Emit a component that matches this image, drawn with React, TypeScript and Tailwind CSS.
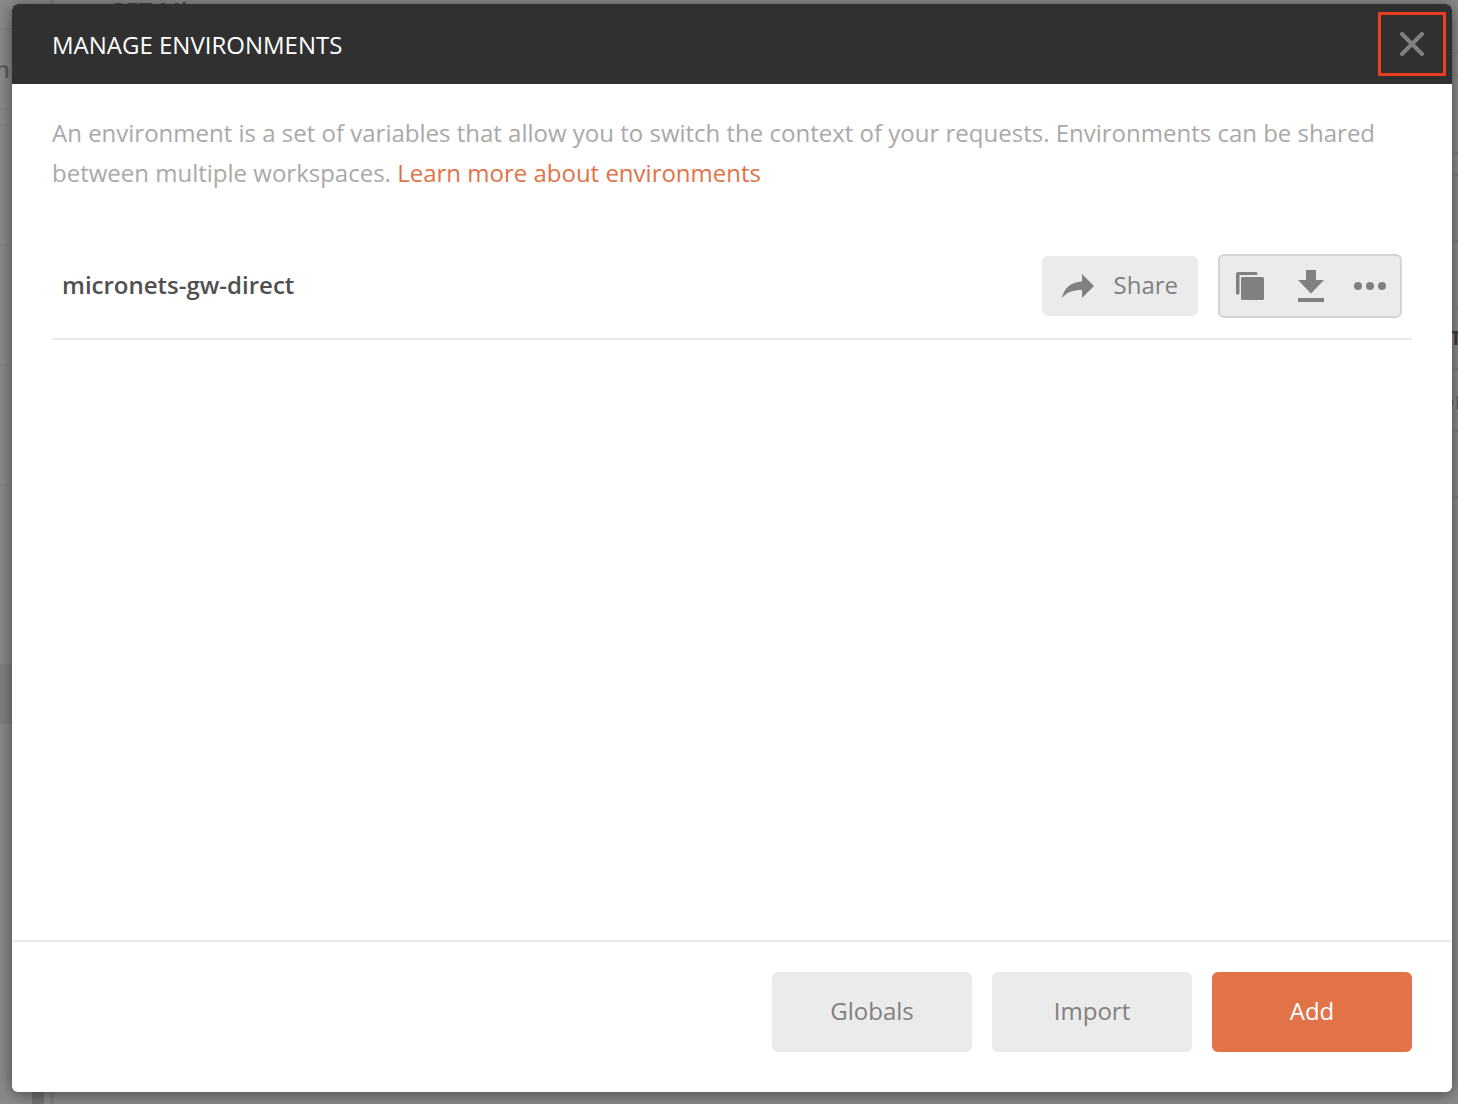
import React, { useState } from 'react';

interface Environment {
  id: string;
  name: string;
}

interface StripRow {
  id: string;
  className: string;
  text?: string;
}

const environments: Environment[] = [
  { id: 'e1', name: 'micronets-gw-direct' },
];

// Rows of the workspace that stay visible on both sides of the dialog
const sidebarRows: StripRow[] = [
  { id: 'l1', className: 'h-[30px] border-b-2' },
  { id: 'l2', className: 'h-20 justify-end border-b-2 pr-10 text-2xl font-semibold text-[#5c5c5c]', text: 'n' },
  { id: 'l3', className: 'h-4 border-b-2' },
  { id: 'l4', className: 'h-[120px] border-b-2' },
  { id: 'l5', className: 'h-[120px] border-b-2' },
  { id: 'l6', className: 'h-[120px] border-b-2' },
  { id: 'l7', className: 'h-[178px]' },
  { id: 'l8', className: 'h-[60px] bg-[#808080]' },
];

const detailRows: StripRow[] = [
  { id: 'r1', className: 'h-[54px] border-b-2' },
  { id: 'r2', className: 'h-[22px] border-b-2' },
  { id: 'r3', className: 'h-[78px] border-b-2' },
  { id: 'r4', className: 'h-[22px] border-b-2' },
  { id: 'r5', className: 'h-[66px] border-b-2' },
  { id: 'r6', className: 'h-[66px] border-b-2' },
  { id: 'r7', className: 'h-[62px] border-b-2 pl-2.5 text-xl font-bold text-[#3f3f3f]', text: 'T' },
  { id: 'r8', className: 'h-[62px] border-b-2 text-2xl text-[#666666]', text: 'or' },
  { id: 'r9', className: 'h-[66px] border-b-2' },
];

function Strip({ rows }: { rows: StripRow[] }) {
  return (
    <>
      {rows.map((row) => (
        <div key={row.id} className={`flex items-center overflow-hidden border-[#7f7f7f] ${row.className}`}>
          {row.text}
        </div>
      ))}
    </>
  );
}

function Workspace() {
  return (
    <div aria-hidden="true" className="absolute inset-0 flex overflow-hidden bg-[#8b8b8b]">
      <div className="flex w-[50px] shrink-0 flex-col">
        <Strip rows={sidebarRows} />
        <div className="ml-8 w-3 grow bg-[#727272]" />
      </div>
      <div className="w-1 shrink-0 bg-[#7f7f7f]" />
      <div className="grow overflow-hidden pl-[54px] text-2xl leading-[22px] font-semibold text-[#4a4a4a]">GET Mi</div>
      <div className="flex w-[18px] shrink-0 flex-col">
        <Strip rows={detailRows} />
      </div>
    </div>
  );
}

function ShareIcon() {
  return (
    <svg className="h-6 w-8" viewBox="0 0 32 24" fill="currentColor" aria-hidden="true">
      <path d="M20 0 32 12 20 24V16C11 16 5 18 0 24 2 14 9 8 20 7.500Z" />
    </svg>
  );
}

function DuplicateIcon() {
  return (
    <svg className="h-7 w-7" viewBox="0 0 28 28" fill="currentColor" aria-hidden="true">
      <rect x="5" y="5" width="23" height="23" rx="1.500" />
      <path d="M2 0H20a1.500 1.500 0 0 1 0 3H3.500V21a1.750 1.750 0 0 1-3.500 0V2a2 2 0 0 1 2-2Z" />
    </svg>
  );
}

function DownloadIcon() {
  return (
    <svg className="h-8 w-7" viewBox="0 0 28 32" fill="currentColor" aria-hidden="true">
      <path d="M10 0H20V10H28L15 23.500 2 10H10ZM2 28H28V32H2Z" />
    </svg>
  );
}

function MoreIcon() {
  return (
    <svg className="h-8 w-8" viewBox="0 0 32 32" fill="currentColor" aria-hidden="true">
      <circle cx="4" cy="16" r="4" />
      <circle cx="16" cy="16" r="4" />
      <circle cx="28" cy="16" r="4" />
    </svg>
  );
}

function EnvironmentRow({ environment }: { environment: Environment }) {
  return (
    <li className="flex items-center justify-between border-b-2 border-[#eaeaea] px-2.5 pb-5">
      <span className="pb-0.5 font-semibold text-[#505050]">{environment.name}</span>
      <div className="flex items-center gap-5 text-[#808080]">
        <button type="button" className="flex h-[60px] items-center gap-5 rounded-md bg-[#ebebeb] px-5">
          <ShareIcon />
          <span className="pb-0.5">Share</span>
        </button>
        <div className="flex h-16 items-center rounded-md border-2 border-[#d4d4d4] bg-[#ebebeb]">
          <button type="button" aria-label="Duplicate" className="flex h-full w-[60px] items-center justify-center">
            <DuplicateIcon />
          </button>
          <button type="button" aria-label="Download" className="flex h-full w-[60px] items-center justify-center">
            <DownloadIcon />
          </button>
          <button type="button" aria-label="More actions" className="flex h-full w-[60px] items-center justify-center">
            <MoreIcon />
          </button>
        </div>
      </div>
    </li>
  );
}

export default function App() {
  const [open, setOpen] = useState(true);

  return (
    <div className="relative flex min-h-screen pt-1 pr-1.5 pb-3 pl-3 font-['Open_Sans',sans-serif] text-2xl">
      <Workspace />
      {open && (
        <section
          role="dialog"
          aria-labelledby="dialog-title"
          className="relative flex grow flex-col overflow-hidden rounded-md bg-white shadow-[0_2px_16px_rgba(0,0,0,0.5)]"
        >
          <header className="flex h-20 items-center justify-between bg-[#303030] pr-1.5 pl-10">
            <h1 id="dialog-title" className="pt-0.5 text-white">MANAGE ENVIRONMENTS</h1>
            <button
              type="button"
              aria-label="Close"
              onClick={() => setOpen(false)}
              className="flex h-16 w-[68px] items-center justify-center border-3 border-[#e93d22] text-[#808080]"
            >
              <svg className="h-6 w-6" viewBox="0 0 24 24" fill="none" stroke="currentColor" strokeWidth="4" strokeLinecap="round" aria-hidden="true">
                <path d="M2 2 22 22M22 2 2 22" />
              </svg>
            </button>
          </header>

          <main className="grow px-10 pt-[29px]">
            <p className="leading-10 text-[#a9a9a9]">
              An environment is a set of variables that allow you to switch the context of your requests. Environments can be shared between multiple workspaces.{' '}
              <a href="#environments" className="text-[#e27247]">Learn more about environments</a>
            </p>
            <ul className="mt-[61px]">
              {environments.map((environment) => (
                <EnvironmentRow key={environment.id} environment={environment} />
              ))}
            </ul>
          </main>

          <footer className="flex justify-end gap-5 border-t-2 border-[#eaeaea] px-10 pt-[30px] pb-10 text-[#808080]">
            <button type="button" className="h-20 w-[200px] rounded-md bg-[#ebebeb] pb-0.5">Globals</button>
            <button type="button" className="h-20 w-[200px] rounded-md bg-[#ebebeb] pb-0.5">Import</button>
            <button type="button" className="h-20 w-[200px] rounded-md bg-[#e27247] pb-0.5 text-white">Add</button>
          </footer>
        </section>
      )}
    </div>
  );
}
